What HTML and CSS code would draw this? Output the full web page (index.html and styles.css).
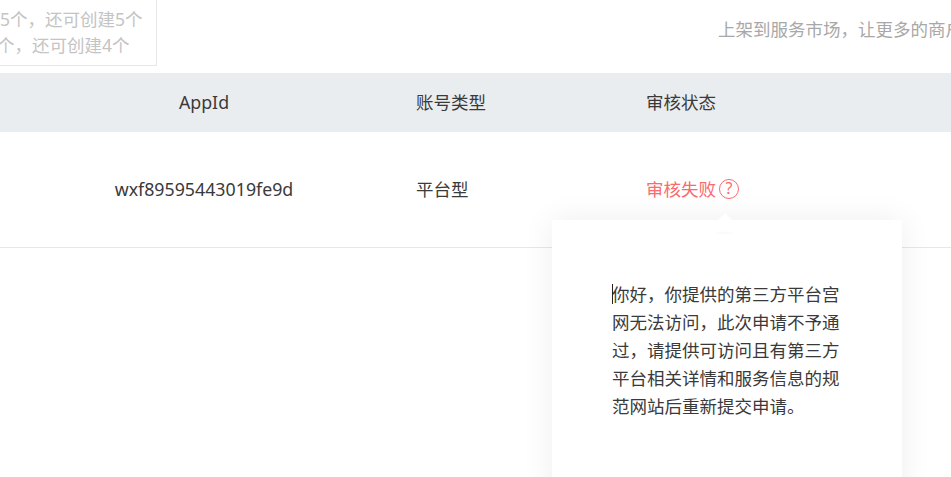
FILE: index.html
```html
<!DOCTYPE html>
<html lang="en">
<head>
    <meta charset="utf-8">
    <title>第三方平台</title>
    <link rel="stylesheet" href="styles.css">
</head>
<body>
    <div class="top">
        <div class="quota">
            <div>5个，还可创建5个</div>
            <div class="quota-second">个，还可创建4个</div>
        </div>
        <div class="top-tip">上架到服务市场，让更多的商户使用</div>
    </div>

    <div class="row head">
        <div class="cell-id">AppId</div>
        <div class="cell">账号类型</div>
        <div class="cell">审核状态</div>
    </div>

    <div class="row body-row">
        <div class="cell-id">wxf89595443019fe9d</div>
        <div class="cell">平台型</div>
        <div class="cell failed">
            审核失败
            <span class="help">?</span>
        </div>

        <!-- Reject reason popover -->
        <div class="popover">
            <span class="caret"></span>
            <p>你好，你提供的第三方平台宫网无法访问，此次申请不予通过，请提供可访问且有第三方平台相关详情和服务信息的规范网站后重新提交申请。</p>
        </div>
    </div>
</body>
</html>
```

FILE: styles.css
```css
html, body {
    height: 477px;
    overflow: hidden;
}
body {
    margin: 0;
    background: #fff;
    color: #3a3a3a;
    font-family: "Noto Sans", "Noto Sans CJK SC", sans-serif;
    font-size: 17.5px;
}
.top {
    height: 73px;
    display: flex;
    justify-content: space-between;
    align-items: flex-start;
    white-space: nowrap;
    overflow: hidden;
}
.quota {
    box-sizing: border-box;
    width: 157px;
    height: 66px;
    padding-top: 6px;
    line-height: 26px;
    color: #c4c4c4;
    border-right: 1px solid #e7e7e7;
    border-bottom: 1px solid #e7e7e7;
}
.quota-second {
    margin-left: -3px;
}
.top-tip {
    width: 233px;
    overflow: hidden;
    margin-top: 16px;
    line-height: 26px;
    color: #a8a8a8;
}
.row {
    display: grid;
    grid-template-columns: 408px 230px 1fr;
    align-items: center;
    box-sizing: border-box;
    padding-bottom: 2px;
}
.head {
    height: 59px;
    background: #eaedf0;
}
.body-row {
    position: relative;
    height: 116px;
    border-bottom: 1px solid #e7e7e7;
}
.cell-id {
    text-align: center;
    font-size: 17.8px;
}
.cell {
    padding-left: 8px;
}
.failed {
    display: flex;
    align-items: center;
    gap: 3px;
    color: #fa6a6f;
}
.help {
    box-sizing: border-box;
    width: 20px;
    height: 20px;
    border: 1.5px solid #fa6a6f;
    border-radius: 50%;
    font-size: 16px;
    line-height: 17px;
    text-align: center;
}
.popover {
    position: absolute;
    left: 552px;
    top: 88px;
    box-sizing: border-box;
    width: 350px;
    height: 300px;
    padding: 60px 60px;
    background: #fff;
    box-shadow: 0 0 30px rgba(0, 0, 0, 0.07);
}
.popover::before {
    content: "";
    position: absolute;
    left: 166px;
    top: -7px;
    border-left: 7px solid transparent;
    border-right: 7px solid transparent;
    border-bottom: 7px solid #fff;
}
.popover::after {
    content: "";
    position: absolute;
    left: 162px;
    top: 11px;
    width: 22px;
    height: 4px;
    background: radial-gradient(closest-side, #f8f8f8, #fff);
}
.popover p {
    margin: 0;
    line-height: 28px;
    color: #3a3a3a;
}
.caret {
    position: absolute;
    left: 60px;
    top: 64px;
    width: 1px;
    height: 20px;
    background: #222;
}
```
